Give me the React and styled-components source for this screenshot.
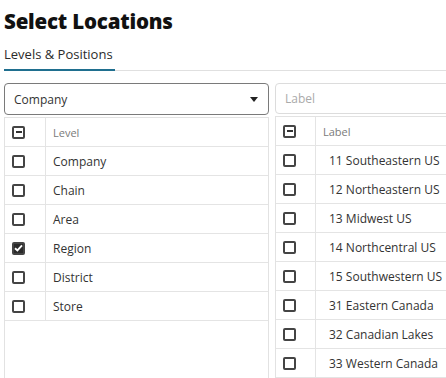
import React from "react";
import styled, { createGlobalStyle } from "styled-components";

const GlobalStyle = createGlobalStyle`
  html, body {
    margin: 0;
    padding: 0;
    background: #fff;
    overflow: hidden;
  }
  body {
    font-family: "Open Sans", "Noto Sans", sans-serif;
    color: #333;
  }
`;

const Page = styled.div`
  height: 100vh;
  display: flex;
  flex-direction: column;
  padding-left: 4px;
  box-sizing: border-box;
  overflow: hidden;
`;

const Title = styled.h1`
  margin: 7px 0 0;
  font-size: 20.5px;
  line-height: 28px;
  font-weight: 800;
  color: #111;
  letter-spacing: -0.2px;
`;

const TabBar = styled.div`
  display: flex;
  margin-top: 10px;
  border-bottom: 1px solid #e0e0e0;
`;

const Tab = styled.div`
  font-size: 13px;
  line-height: 18px;
  padding-bottom: 6px;
  color: #2b2b2b;
  border-bottom: 2px solid ${(p) => (p.active ? "#1f6f8f" : "transparent")};
  margin-bottom: -1px;
  width: 111px;
`;

const Columns = styled.div`
  flex: 1;
  display: grid;
  grid-template-columns: 265px 265px;
  column-gap: 6px;
  margin-top: 12px;
  min-height: 0;
`;

const Panel = styled.div`
  display: flex;
  flex-direction: column;
  min-height: 0;
`;

const SelectBox = styled.div`
  height: 32px;
  box-sizing: border-box;
  border: 1px solid ${(p) => (p.muted ? "#dcdcdc" : "#7a7a7a")};
  border-radius: 4px;
  display: flex;
  align-items: center;
  justify-content: space-between;
  padding: 0 10px 0 9px;
  font-size: 12px;
  color: ${(p) => (p.muted ? "#aaa" : "#333")};
`;

const Caret = styled.span`
  width: 0;
  height: 0;
  border-left: 4px solid transparent;
  border-right: 4px solid transparent;
  border-top: 5px solid #222;
`;

const Table = styled.div`
  margin-top: 2px;
  flex: 1;
  border: 1px solid #e2e2e2;
  border-bottom: none;
  display: flex;
  flex-direction: column;
`;

const Row = styled.div`
  display: grid;
  grid-template-columns: ${(p) => p.col}px 1fr;
  height: 29px;
  box-sizing: border-box;
  border-bottom: 1px solid #e4e4e4;
`;

const CheckCell = styled.div`
  border-right: 1px solid #e4e4e4;
  display: flex;
  align-items: center;
  padding-left: 7px;
`;

const TextCell = styled.div`
  display: flex;
  align-items: center;
  padding-left: ${(p) => p.indent}px;
  font-size: ${(p) => (p.head ? "11px" : "12px")};
  color: ${(p) => (p.head ? "#7a7a7a" : "#333")};
  white-space: nowrap;
`;

const Box = styled.span`
  width: 13px;
  height: 13px;
  box-sizing: border-box;
  border: 2px solid #444;
  border-radius: 2px;
  background: ${(p) => (p.checked ? "#2a2a2a" : "#fff")};
  display: flex;
  align-items: center;
  justify-content: center;
`;

const Dash = styled.span`
  width: 6px;
  height: 2px;
  background: #333;
`;

const Check = () => (
  <svg width="9" height="8" viewBox="0 0 9 8">
    <path d="M1 4.2 L3.4 6.4 L8 1.4" fill="none" stroke="#fff" strokeWidth="1.9" />
  </svg>
);

const CheckBox = ({ state }) => (
  <Box checked={state === "checked"}>
    {state === "mixed" && <Dash />}
    {state === "checked" && <Check />}
  </Box>
);

const levels = [
  { name: "Company" },
  { name: "Chain" },
  { name: "Area" },
  { name: "Region", checked: true },
  { name: "District" },
  { name: "Store" },
];

const positions = [
  "11 Southeastern US",
  "12 Northeastern US",
  "13 Midwest US",
  "14 Northcentral US",
  "15 Southwestern US",
  "31 Eastern Canada",
  "32 Canadian Lakes",
  "33 Western Canada",
];

const App = () => {
  return (
    <Page>
      <GlobalStyle />
      <Title>Select Locations</Title>
      <TabBar>
        <Tab active>Levels &amp; Positions</Tab>
      </TabBar>
      <Columns>
        <Panel>
          <SelectBox>
            Company
            <Caret />
          </SelectBox>
          <Table>
            <Row col={41}>
              <CheckCell>
                <CheckBox state="mixed" />
              </CheckCell>
              <TextCell head indent={7}>Level</TextCell>
            </Row>
            {levels.map((l) => (
              <Row col={41} key={l.name}>
                <CheckCell>
                  <CheckBox state={l.checked ? "checked" : "none"} />
                </CheckCell>
                <TextCell indent={7}>{l.name}</TextCell>
              </Row>
            ))}
          </Table>
        </Panel>
        <Panel>
          <SelectBox muted>Label</SelectBox>
          <Table>
            <Row col={40}>
              <CheckCell>
                <CheckBox state="mixed" />
              </CheckCell>
              <TextCell head indent={7}>Label</TextCell>
            </Row>
            {positions.map((p) => (
              <Row col={40} key={p}>
                <CheckCell>
                  <CheckBox state="none" />
                </CheckCell>
                <TextCell indent={13}>{p}</TextCell>
              </Row>
            ))}
          </Table>
        </Panel>
      </Columns>
    </Page>
  );
};

export default App;
